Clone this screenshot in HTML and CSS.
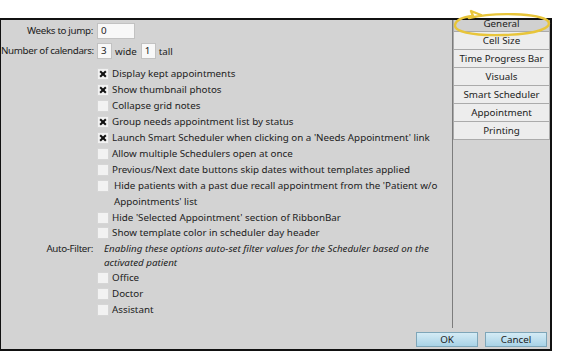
FILE: index.html
```html
<!DOCTYPE html>
<html>
<head>
    <title>Scheduler Settings - General</title>
    <link rel="stylesheet" href="styles.css">
</head>
<body>
<div class="page">
    <div class="dialog">
        <div class="form">
            <span class="cap">Weeks to jump:</span>
            <div class="field"><span class="box w-wide">0</span></div>

            <span class="cap">Number of calendars:</span>
            <div class="field">
                <span class="box w-small">3</span><span class="unit">wide</span>
                <span class="box w-small">1</span><span class="unit">tall</span>
            </div>

            <div class="opt first"><span class="chk on"></span><span>Display kept appointments</span></div>
            <div class="opt"><span class="chk on"></span><span>Show thumbnail photos</span></div>
            <div class="opt"><span class="chk"></span><span>Collapse grid notes</span></div>
            <div class="opt"><span class="chk on"></span><span>Group needs appointment list by status</span></div>
            <div class="opt"><span class="chk on"></span><span>Launch Smart Scheduler when clicking on a 'Needs Appointment' link</span></div>
            <div class="opt"><span class="chk"></span><span>Allow multiple Schedulers open at once</span></div>
            <div class="opt"><span class="chk"></span><span>Previous/Next date buttons skip dates without templates applied</span></div>
            <div class="opt"><span class="chk"></span><span class="wrap">Hide patients with a past due recall appointment from the 'Patient w/o Appointments' list</span></div>
            <div class="opt"><span class="chk"></span><span>Hide 'Selected Appointment' section of RibbonBar</span></div>
            <div class="opt tight"><span class="chk"></span><span>Show template color in scheduler day header</span></div>

            <span class="cap top">Auto-Filter:</span>
            <div class="note">Enabling these options auto-set filter values for the Scheduler based on the activated patient</div>
            <div class="opt"><span class="chk"></span><span>Office</span></div>
            <div class="opt"><span class="chk"></span><span>Doctor</span></div>
            <div class="opt"><span class="chk"></span><span>Assistant</span></div>
        </div>

        <div class="tabs">
            <div class="tab active">General</div>
            <div class="tab">Cell Size</div>
            <div class="tab">Time Progress Bar</div>
            <div class="tab">Visuals</div>
            <div class="tab">Smart Scheduler</div>
            <div class="tab">Appointment</div>
            <div class="tab">Printing</div>
        </div>

        <div class="footer">
            <button class="btn">OK</button>
            <button class="btn">Cancel</button>
        </div>
    </div>

    <!-- callout drawn over the selected tab -->
    <svg class="highlight" width="110" height="34" viewBox="0 0 110 34">
        <path d="M20 9 C 45 3, 90 4, 99 12 C 104 19, 88 25, 55 26 C 20 27, 5 22, 6 16 C 7 11, 14 8, 24 7 L 22 2 L 32 6" fill="none" stroke="#e8c53a" stroke-width="2.4" stroke-linejoin="round" stroke-linecap="round"/>
    </svg>
</div>
</body>
</html>
```

FILE: styles.css
```css
body { margin: 0; background: #fff; font-family: "Noto Sans", "Open Sans", sans-serif; font-size: 9.8px; color: #1c1c1c; }
.page { position: relative; width: 561px; height: 364px; padding-top: 18px; box-sizing: border-box; }

.dialog { width: 552px; height: 333px; box-sizing: border-box; border: 2px solid #111; border-left-width: 1px; background: #d3d3d3;
    display: grid; grid-template-columns: 1fr 98px; grid-template-rows: 1fr 21px; }

.form { display: grid; grid-template-columns: 92px 1fr; column-gap: 4px; align-content: start; padding-top: 1px; grid-auto-rows: min-content; }
.cap { grid-column: 1; text-align: right; line-height: 20px; white-space: nowrap; letter-spacing: -0.35px; }
.cap.top { line-height: 16px; }
.field { grid-column: 2; display: flex; align-items: center; height: 20px; }
.box { height: 16px; box-sizing: border-box; border: 1px solid #c2c2c2; background: #f8f8f8; line-height: 14px; padding-left: 3px; }
.w-wide { width: 38px; }
.w-small { width: 15px; }
.unit { margin: 0 4px 0 3px; }

.opt { grid-column: 2; display: flex; align-items: flex-start; line-height: 16px; }
.opt.first { margin-top: 5px; }
.opt.tight { margin-top: -1px; }
.opt .wrap { max-width: 340px; padding-left: 2px; }
.chk { flex: none; width: 12px; height: 12px; margin: 2px 3px 0 0; box-sizing: border-box; border: 1px solid #d6d6d6; background: #f2f2f2; position: relative; }
.chk.on::before, .chk.on::after { content: ""; position: absolute; left: 1px; top: 4px; width: 8px; height: 2px; background: #111; }
.chk.on::before { transform: rotate(45deg); }
.chk.on::after { transform: rotate(-45deg); }

.note { grid-column: 2; font-style: italic; line-height: 14px; padding: 1px 0 0 7px; max-width: 345px; }

.tabs { grid-row: 1; grid-column: 2; border-left: 1px solid #7c7c7c; }
.tab { height: 18px; box-sizing: border-box; border: 1px solid #ababab; border-top: none; background: #ededed; text-align: center; line-height: 17px; color: #222; }
.tab.active { height: 12px; line-height: 8px; background: #d0d0d0; }

.footer { grid-column: 1 / span 2; display: flex; justify-content: flex-end; align-items: flex-start; gap: 7px; padding: 4px 3px 0 0; }
.btn { width: 62px; height: 15px; padding: 0; border: 1px solid #7ea6b9; background: linear-gradient(#d4ebf5, #a9d3e7); font: inherit; line-height: 13px; color: #1c1c1c; }

.highlight { position: absolute; left: 449px; top: 9px; }
```
